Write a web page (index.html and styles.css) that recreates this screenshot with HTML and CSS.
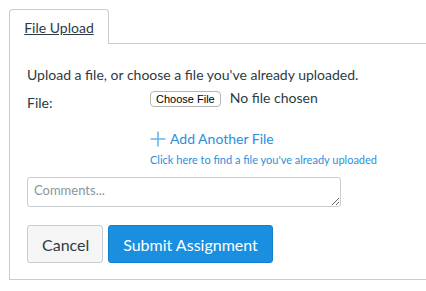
FILE: index.html
```html
<!DOCTYPE html>
<html>
<head>
<meta charset="utf-8">
<link rel="stylesheet" href="styles.css">
</head>
<body>
<div class="tabs">
  <div class="tab"><a class="tab-link" href="#">File Upload</a></div>
  <div class="tab-rest"></div>
</div>
<div class="panel">
  <p class="intro">Upload a file, or choose a file you've already uploaded.</p>
  <div class="file-row">
    <label class="file-label">File:</label>
    <input class="file-input" type="file">
  </div>
  <div class="links">
    <a class="add-link" href="#"><svg class="plus" width="16" height="16" viewBox="0 0 16 16"><path d="M8 0.5V15.5M0.5 8H15.5" stroke="#6fb4e6" stroke-width="1.6" fill="none"/></svg><span>Add Another File</span></a>
    <a class="find-link" href="#">Click here to find a file you've already uploaded</a>
  </div>
  <textarea class="comments" placeholder="Comments..."></textarea>
  <div class="actions">
    <button class="btn btn-cancel">Cancel</button>
    <button class="btn btn-submit">Submit Assignment</button>
  </div>
</div>
</body>
</html>
```
FILE: styles.css
```css
html, body {
  margin: 0;
  background: #fff;
}
body {
  padding: 9px 0 0 9px;
  font-family: Lato, "Open Sans", sans-serif;
  color: #2d3b45;
  overflow: hidden;
}
.tabs {
  display: flex;
  height: 35px;
}
.tab {
  width: 100px;
  border: 1px solid #c7cdd1;
  border-bottom: none;
  border-radius: 4px 4px 0 0;
  background: #fff;
  display: flex;
  align-items: center;
  justify-content: center;
  padding-top: 1px;
  box-sizing: border-box;
}
.tab-link {
  color: #2d3b45;
  font-size: 14px;
  text-decoration: underline;
}
.tab-rest {
  flex: 1;
  border-bottom: 1px solid #c7cdd1;
}
.panel {
  border-left: 1px solid #c7cdd1;
  border-bottom: 1px solid #c7cdd1;
  padding: 22px 0 16px 17px;
  margin-right: -10px;
}
.intro {
  margin: 0;
  font-size: 14px;
  line-height: 17px;
}
.file-row {
  display: flex;
  align-items: flex-start;
  margin-top: 6px;
}
.file-label {
  width: 123px;
  font-size: 14px;
  padding-top: 5px;
}
.file-input {
  font-family: Lato, sans-serif;
  font-size: 14px;
  color: #2d3b45;
}
.file-input::file-selector-button {
  font-family: "Liberation Sans", Arial, sans-serif;
  font-size: 11px;
  background: #fff;
  border: 1px solid #b5b5b5;
  border-radius: 4px;
  padding: 1px 5px;
  margin-right: 9px;
  color: #000;
  height: 16px;
}
.links {
  display: flex;
  flex-direction: column;
  align-items: flex-start;
  margin: 19px 0 0 123px;
}
.add-link {
  display: flex;
  align-items: center;
  gap: 4px;
  color: #2b8fdb;
  text-decoration: none;
  font-size: 14px;
}
.find-link {
  margin-top: 6px;
  color: #2b8fdb;
  text-decoration: none;
  font-size: 11px;
}
.comments {
  display: block;
  margin-top: 11px;
  width: 314px;
  height: 30px;
  box-sizing: border-box;
  border: 1px solid #c7cdd1;
  border-radius: 3px;
  padding: 4px 6px;
  font-family: Lato, sans-serif;
  font-size: 13px;
  color: #2d3b45;
}
.comments::placeholder {
  color: #8b969e;
}
.actions {
  display: flex;
  gap: 5px;
  margin-top: 18px;
}
.btn {
  height: 38px;
  border-radius: 3px;
  font-family: Lato, sans-serif;
  font-size: 16px;
  padding: 0 14px;
}
.btn-cancel {
  width: 76px;
  background: #f5f5f5;
  border: 1px solid #c7cdd1;
  color: #2d3b45;
}
.btn-submit {
  width: 165px;
  background: #1a8fe0;
  border: 1px solid #1480cb;
  color: #fff;
}
```
